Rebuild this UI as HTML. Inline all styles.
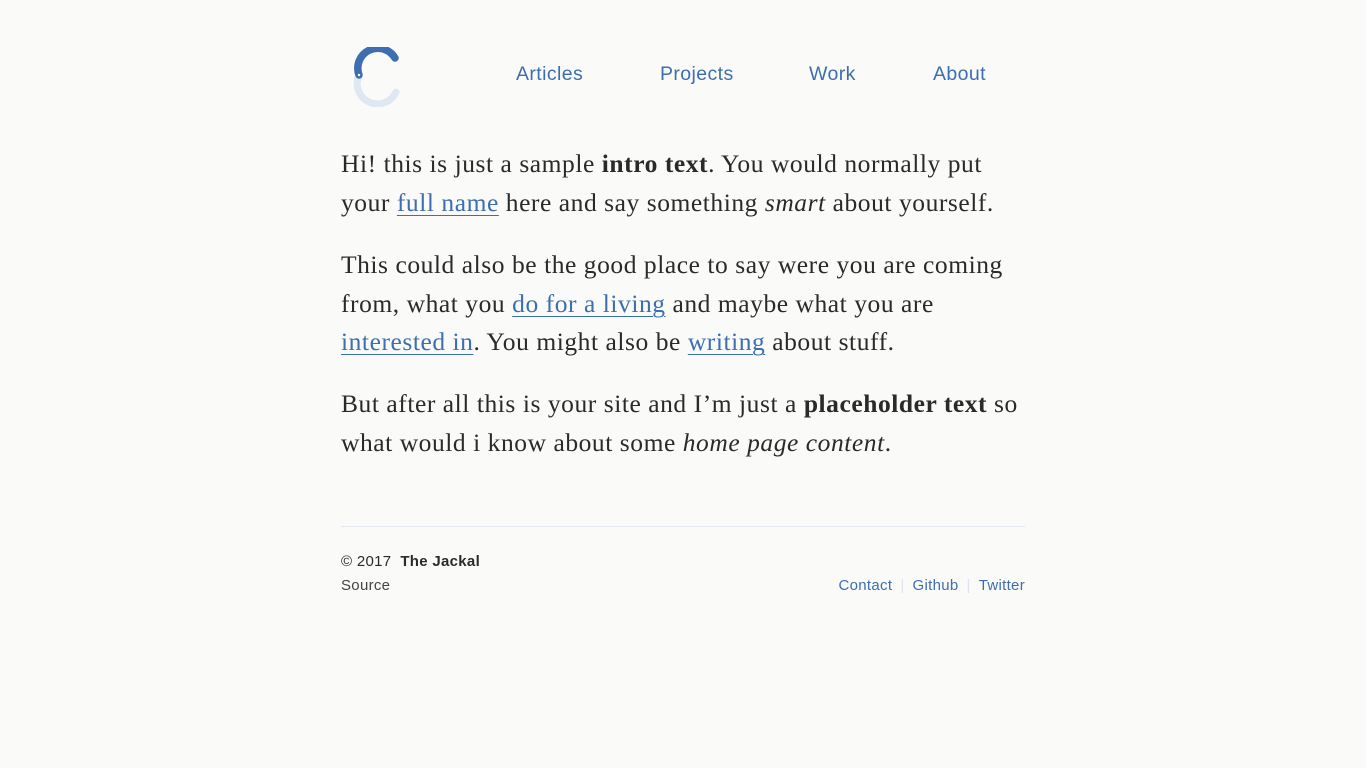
<!DOCTYPE html>
<html><head><meta charset="utf-8"><style>
body{margin:0;background:#fafaf8;color:#2a2a2a;width:1366px;height:768px;overflow:hidden}
.wrap{position:absolute;left:341px;width:684px;top:0}
nav a{position:absolute;top:63px;font:19.5px "Liberation Sans",sans-serif;letter-spacing:0.4px;color:#3d6fb0;text-decoration:none}
p{position:absolute;left:0;margin:0;font:25.5px/38.6px "Liberation Serif",serif;letter-spacing:0.55px;white-space:nowrap}
p a{color:#3d6fb0;text-decoration:underline;text-decoration-thickness:1px;text-underline-offset:4px}
.f{font:15px "Liberation Sans",sans-serif;letter-spacing:0.3px;position:absolute}
.f a{color:#3d6fb0;text-decoration:none}
.sep{color:#dde3ec;margin:0 8px}
</style></head><body>
<svg style="position:absolute;left:350px;top:47px" width="56" height="60" viewBox="0 0 56 60">
<path d="M9 28 A20 20 0 0 0 46 45" fill="none" stroke="#dfe7f3" stroke-width="7" stroke-linecap="round"/>
<path d="M9 28 A20 20 0 0 1 45 11" fill="none" stroke="#3d6fb0" stroke-width="7.5" stroke-linecap="round"/>
<circle cx="9" cy="28" r="1.2" fill="#fff"/>
</svg>
<div class="wrap">
<nav><a style="left:175px">Articles</a><a style="left:319px">Projects</a><a style="left:468px">Work</a><a style="left:592px">About</a></nav>
<p style="top:145px">Hi! this is just a sample <b>intro text</b>. You would normally put<br>your <a>full name</a> here and say something <i>smart</i> about yourself.</p>
<p style="top:246px">This could also be the good place to say were you are coming<br>from, what you <a>do for a living</a> and maybe what you are<br><a>interested in</a>. You might also be <a>writing</a> about stuff.</p>
<p style="top:385px">But after all this is your site and I’m just a <b>placeholder text</b> so<br>what would i know about some <i>home page content</i>.</p>
<div style="position:absolute;top:526px;left:0;width:684px;height:1px;background:#e3e7ee"></div>
<div class="f" style="top:553px;left:0">© 2017 &nbsp;<b>The Jackal</b></div>
<div class="f" style="top:577px;left:0;color:#444">Source</div>
<div class="f" style="top:577px;right:0"><a>Contact</a><span class="sep">|</span><a>Github</a><span class="sep">|</span><a>Twitter</a></div>
</div>
</body></html>
